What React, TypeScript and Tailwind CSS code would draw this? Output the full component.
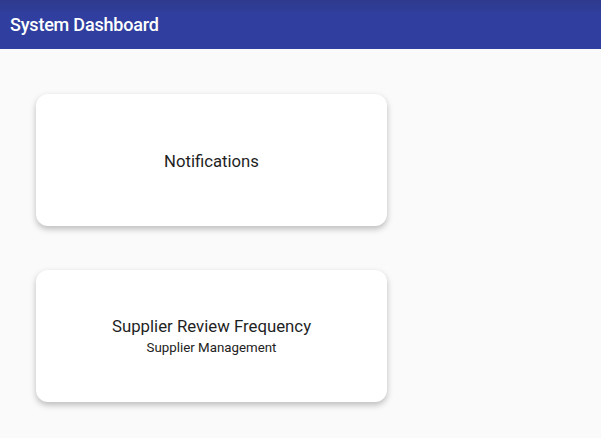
export default function App() {
  return (
    <div className="min-h-[438px] bg-[#fafafa] font-['Roboto',sans-serif]">
      <header className="h-[49px] flex items-center px-[10px] bg-gradient-to-b from-[#2f3a8c] to-[#303f9f] to-[30%]">
        <h1 className="text-white text-[18px] font-medium tracking-[-0.2px]">System Dashboard</h1>
      </header>
      <main className="pt-[45px] pl-[36px] flex flex-col gap-[44px]">
        <div className="w-[351px] h-[132px] bg-white rounded-[12px] shadow-[0_3px_6px_rgba(0,0,0,0.25)] flex flex-col items-center justify-center pt-[3px]">
          <div className="text-[16.7px] text-[#1f1f1f]">Notifications</div>
        </div>
        <div className="w-[351px] h-[132px] bg-white rounded-[12px] shadow-[0_3px_6px_rgba(0,0,0,0.25)] flex flex-col items-center justify-center">
          <div className="text-[16.8px] text-[#1f1f1f] leading-[22px]">Supplier Review Frequency</div>
          <div className="text-[13.3px] text-[#222] leading-[21px]">Supplier Management</div>
        </div>
      </main>
    </div>
  );
}
